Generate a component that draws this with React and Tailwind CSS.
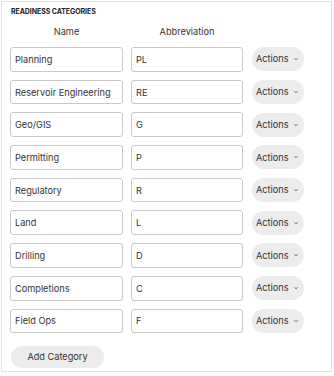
import React from 'react';

const CATEGORIES = [
    { name: 'Planning', abbr: 'PL' },
    { name: 'Reservoir Engineering', abbr: 'RE' },
    { name: 'Geo/GIS', abbr: 'G' },
    { name: 'Permitting', abbr: 'P' },
    { name: 'Regulatory', abbr: 'R' },
    { name: 'Land', abbr: 'L' },
    { name: 'Drilling', abbr: 'D' },
    { name: 'Completions', abbr: 'C' },
    { name: 'Field Ops', abbr: 'F' },
];

export default function App() {
    return (
        <div
            className="w-[334px] h-[376px] bg-white pl-px pt-px"
            style={{ fontFamily: 'Inter, "Noto Sans", sans-serif' }}
        >
            <section className="w-[331px] h-[371px] border border-[#e4e4e4] px-[8px] pt-[6px]">
                <h2 className="pl-[1px] text-[7px] leading-[8px] font-bold uppercase text-[#222] tracking-[-0.01em]">
                    Readiness Categories
                </h2>

                {/* Column headers */}
                <div className="mt-[10px] grid grid-cols-[113px_112px] gap-x-2 text-[9.2px] leading-[12px] text-[#333]">
                    <div className="text-center">Name</div>
                    <div className="text-center">Abbreviation</div>
                </div>

                {/* Rows */}
                <div className="mt-[9px] flex flex-col gap-[8px]">
                    {CATEGORIES.map((c) => (
                        <div key={c.abbr} className="flex items-center h-[24.7px]">
                            <input
                                readOnly
                                value={c.name}
                                className="w-[113px] h-full rounded-[3px] border border-[#c9c9c9] bg-white px-[4px] text-[9.2px] text-[#333] outline-none"
                            />
                            <input
                                readOnly
                                value={c.abbr}
                                className="ml-2 w-[112px] h-full rounded-[3px] border border-[#c9c9c9] bg-white px-[4px] text-[9.2px] text-[#333] outline-none"
                            />
                            <button className="ml-[9px] flex items-center h-[24px] w-[52px] rounded-full bg-[#ececec] pl-[4px] text-[9.2px] text-[#333]">
                                Actions
                                <svg
                                    width="6"
                                    height="6"
                                    viewBox="0 0 10 10"
                                    className="ml-[4px]"
                                    fill="none"
                                    stroke="#555"
                                    strokeWidth="1.4"
                                    strokeLinecap="round"
                                    strokeLinejoin="round"
                                >
                                    <path d="M2.5 4l2.5 2.5L7.5 4" />
                                </svg>
                            </button>
                        </div>
                    ))}
                </div>

                <button className="mt-[13px] ml-px h-[22px] w-[93px] rounded-full bg-[#ececec] text-[9.2px] text-[#333]">
                    Add Category
                </button>
            </section>
        </div>
    );
}
